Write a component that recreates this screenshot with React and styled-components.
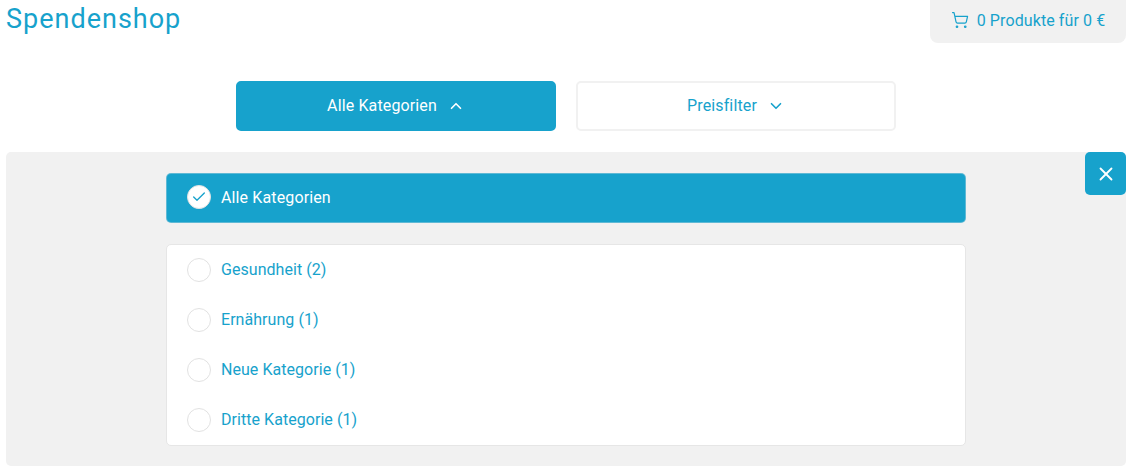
import React from "react";
import styled, { createGlobalStyle } from "styled-components";
import { ShoppingCart, ChevronUp, ChevronDown, X, Check } from "lucide-react";

const GlobalStyle = createGlobalStyle`
  body {
    margin: 0;
    background: #fff;
    font-family: Roboto, "Noto Sans", sans-serif;
    color: #17a2cc;
  }
`;

const Page = styled.div`
  width: 1120px;
  margin-left: 6px;
  height: 474px;
  overflow: hidden;
`;

const Header = styled.header`
  display: flex;
  justify-content: space-between;
  align-items: flex-start;
  height: 81px;
`;

const Title = styled.h1`
  margin: 0;
  font-size: 27px;
  line-height: 38px;
  font-weight: 400;
  letter-spacing: 1px;
  color: #17a2cc;
`;

const Cart = styled.div`
  width: 196px;
  height: 43px;
  box-sizing: border-box;
  padding-bottom: 3px;
  background: #f1f1f1;
  border-radius: 0 0 8px 8px;
  display: flex;
  align-items: center;
  justify-content: center;
  gap: 8px;
  font-size: 16px;
  letter-spacing: 0.1px;
`;

const Filters = styled.div`
  display: flex;
  justify-content: center;
  gap: 20px;
  height: 71px;
`;

const FilterButton = styled.button`
  width: 320px;
  height: 50px;
  box-sizing: border-box;
  padding-bottom: 2px;
  border-radius: 5px;
  border: 2px solid ${p => (p.$active ? "#17a2cc" : "#f1f1f1")};
  background: ${p => (p.$active ? "#17a2cc" : "#fff")};
  color: ${p => (p.$active ? "#fff" : "#17a2cc")};
  font: inherit;
  font-size: 16px;
  letter-spacing: 0.13px;
  display: flex;
  align-items: center;
  justify-content: center;
  gap: 10px;
`;

const Panel = styled.section`
  position: relative;
  height: 314px;
  box-sizing: border-box;
  padding-top: 21px;
  background: #f1f1f1;
  border-radius: 5px;
  display: flex;
  flex-direction: column;
  align-items: center;
`;

const Close = styled.button`
  position: absolute;
  top: 0;
  right: 0;
  width: 41px;
  height: 43px;
  padding: 0;
  border: 0;
  border-radius: 5px;
  background: #17a2cc;
  color: #fff;
  display: flex;
  align-items: center;
  justify-content: center;
`;

const Selected = styled.div`
  width: 800px;
  height: 50px;
  box-sizing: border-box;
  padding-left: 20px;
  padding-bottom: 2px;
  margin-bottom: 21px;
  border: 1px solid rgba(230, 230, 230, 0.35);
  border-radius: 5px;
  background: #17a2cc;
  color: #fff;
  font-size: 16px;
  letter-spacing: 0.13px;
  display: flex;
  align-items: center;
  gap: 10px;
`;

const List = styled.ul`
  width: 800px;
  box-sizing: border-box;
  margin: 0;
  padding: 0;
  list-style: none;
  background: #fff;
  border: 1px solid #e6e6e6;
  border-radius: 5px;
`;

const Item = styled.li`
  height: 50px;
  padding-left: 20px;
  display: flex;
  align-items: center;
  gap: 10px;
  font-size: 16px;
  letter-spacing: 0.05px;
  line-height: 20px;
`;

const Radio = styled.span`
  width: 24px;
  height: 24px;
  box-sizing: border-box;
  border-radius: 50%;
  flex: none;
  background: #fff;
  border: 1px solid #e2e2e2;
  color: #17a2cc;
  display: flex;
  align-items: center;
  justify-content: center;
`;

const categories = ["Gesundheit (2)", "Ernährung (1)", "Neue Kategorie (1)", "Dritte Kategorie (1)"];

export default function App() {
  return (
    <Page>
      <GlobalStyle />
      <Header>
        <Title>Spendenshop</Title>
        <Cart>
          <ShoppingCart size={18} strokeWidth={1.6} />
          0 Produkte für 0 €
        </Cart>
      </Header>
      <Filters>
        <FilterButton $active>
          Alle Kategorien
          <ChevronUp size={18} strokeWidth={2.2} />
        </FilterButton>
        <FilterButton>
          Preisfilter
          <ChevronDown size={18} strokeWidth={2.2} />
        </FilterButton>
      </Filters>
      <Panel>
        <Close>
          <X size={22} strokeWidth={2} />
        </Close>
        <Selected>
          <Radio>
            <Check size={16} strokeWidth={2} />
          </Radio>
          Alle Kategorien
        </Selected>
        <List>
          {categories.map(c => (
            <Item key={c}>
              <Radio />
              {c}
            </Item>
          ))}
        </List>
      </Panel>
    </Page>
  );
}
